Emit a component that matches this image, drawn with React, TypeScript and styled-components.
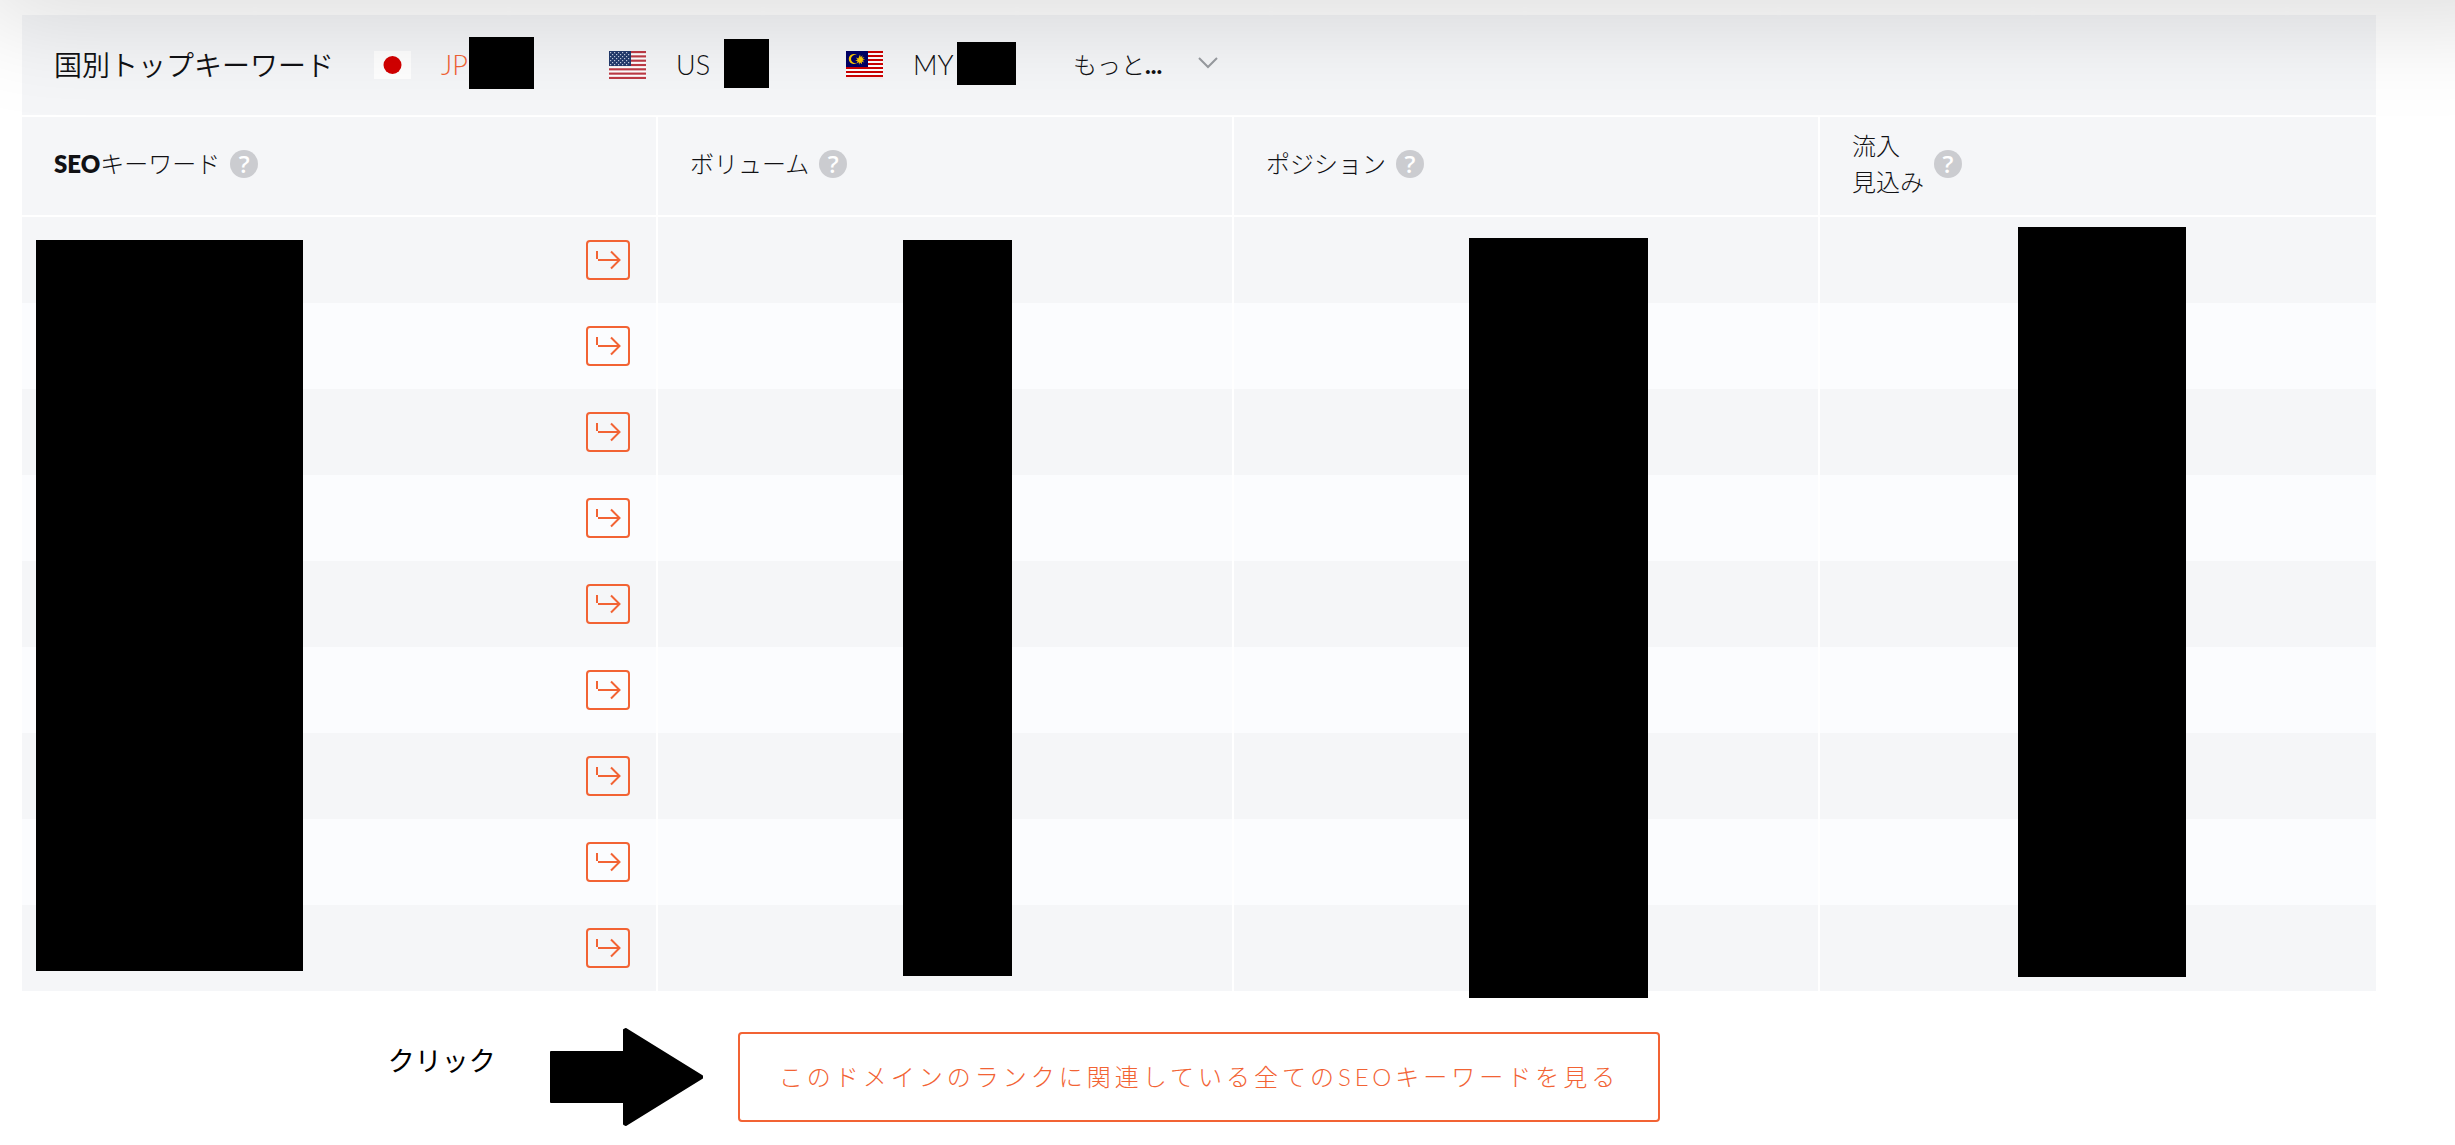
import React from "react";
import styled, { createGlobalStyle } from "styled-components";

const ORANGE = "#f26334";
const INK = "#111114";

const GlobalStyle = createGlobalStyle`
  *, *::before, *::after { box-sizing: border-box; }
  body {
    margin: 0;
    background: #ffffff;
    color: ${INK};
    font-family: Lato, "Noto Sans CJK JP", sans-serif;
    font-weight: 300;
  }
`;

const Page = styled.main`
  position: relative;
  overflow: hidden;
  padding: 15px 79px 19px 22px;
`;

const TopShade = styled.div`
  position: absolute;
  top: -100px;
  left: -20px;
  right: -100px;
  height: 100px;
  box-shadow: 0 10px 110px rgba(0, 0, 0, 0.17);
  pointer-events: none;
`;

const CountryBar = styled.header`
  display: flex;
  align-items: center;
  height: 100px;
  padding-left: 32px;
  margin-bottom: 2px;
  background: #f5f6f8;
`;

const Title = styled.h1`
  margin: 0 40px 0 0;
  font-size: 28px;
  line-height: 40px;
  font-weight: 350;
  white-space: nowrap;
`;

const CountryTab = styled.button<{ $active?: boolean; $width: number }>`
  display: flex;
  align-items: center;
  flex: none;
  width: ${(p) => p.$width}px;
  padding: 0;
  border: 0;
  background: none;
  color: ${(p) => (p.$active ? ORANGE : INK)};
  font: inherit;
  font-size: 27px;
  line-height: 40px;
  text-align: left;
`;

const FlagBox = styled.span`
  display: flex;
  margin-right: 30px;
`;

const Code = styled.span<{ $width: number }>`
  flex: none;
  width: ${(p) => p.$width}px;
`;

const Mask = styled.span<{ $width: number; $height: number }>`
  position: relative;
  flex: none;
  width: ${(p) => p.$width}px;
  height: ${(p) => p.$height}px;
  margin-bottom: 4px;
  background: #000000;
`;

const MoreButton = styled.button`
  display: flex;
  align-items: center;
  gap: 36px;
  padding: 0;
  border: 0;
  background: none;
  color: ${INK};
  font: inherit;
  font-size: 24px;
  line-height: 36px;
  svg { margin-bottom: 4px; }
  b { font-weight: 900; }
`;

const TableArea = styled.div`
  position: relative;
`;

const Table = styled.table`
  width: 100%;
  table-layout: fixed;
  border-collapse: separate;
  border-spacing: 0;
`;

const HeadCell = styled.th`
  height: 100px;
  padding: 0 0 4px 32px;
  border-bottom: 2px solid #ffffff;
  background: #f5f6f8;
  font-size: 24px;
  line-height: 36px;
  font-weight: 300;
  text-align: left;
  & + & { border-left: 2px solid #ffffff; }
`;

const HeadLabel = styled.div`
  display: flex;
  align-items: center;
  gap: 10px;
  b { font-weight: 800; }
`;

const HelpButton = styled.button`
  width: 28px;
  height: 28px;
  padding: 0;
  border: 0;
  border-radius: 50%;
  background: #cbccd0;
  color: #ffffff;
  font-family: "Open Sans", sans-serif;
  font-size: 24px;
  line-height: 28px;
  font-weight: 600;
  text-align: center;
`;

const Row = styled.tr`
  background: #fbfcfe;
  &:nth-child(odd) { background: #f5f6f8; }
`;

const Cell = styled.td`
  height: 86px;
  padding: 0 26px 0 0;
  & + & { border-left: 2px solid #ffffff; }
`;

const GoButton = styled.button`
  display: flex;
  align-items: center;
  justify-content: center;
  width: 44px;
  height: 40px;
  margin-left: auto;
  padding: 0;
  border: 2px solid ${ORANGE};
  border-radius: 4px;
  background: none;
  color: ${ORANGE};
`;

const Redaction = styled.div<{ $left: number; $top: number; $width: number; $height: number }>`
  position: absolute;
  left: ${(p) => (p.$left / 2354) * 100}%;
  top: ${(p) => p.$top}px;
  width: ${(p) => (p.$width / 2354) * 100}%;
  height: ${(p) => p.$height}px;
  background: #000000;
`;

const Footer = styled.footer`
  display: grid;
  grid-template-columns: 1fr auto 1fr;
  align-items: center;
  padding-top: 37px;
`;

const Hint = styled.div`
  display: flex;
  justify-content: flex-end;
  align-items: center;
  gap: 54px;
  padding-right: 35px;
`;

const HintText = styled.span`
  padding-bottom: 32px;
  color: #000000;
  font-size: 27px;
  line-height: 40px;
  font-weight: 400;
`;

const AllKeywordsButton = styled.button`
  height: 90px;
  padding: 0 39px;
  border: 2px solid ${ORANGE};
  border-radius: 4px;
  background: #ffffff;
  color: ${ORANGE};
  font: inherit;
  font-size: 24px;
  line-height: 36px;
  letter-spacing: 4px;
  white-space: nowrap;
`;

const JapanFlag = () => (
  <svg width="37" height="28" viewBox="0 0 37 28" aria-hidden="true">
    <rect width="37" height="28" fill="#fff" />
    <circle cx="18.5" cy="14" r="9" fill="#d30000" />
  </svg>
);

const UsFlag = () => (
  <svg width="37" height="28" viewBox="0 0 37 28" aria-hidden="true">
    <rect width="37" height="28" fill="#fff" />
    {[0, 1, 2, 3, 4, 5, 6].map((i) => (
      <rect key={i} y={i * 4.31} width="37" height="2.15" fill="#be3b46" />
    ))}
    <rect width="22" height="15" fill="#233a6c" />
    {[1, 3, 5, 7, 9, 11, 13].map((y, r) =>
      [1, 5, 9, 13, 17].map((x) => (
        <rect key={`${x}-${y}`} x={x + (r % 2) * 2} y={y} width="1.2" height="1.2" fill="#c3cce0" />
      ))
    )}
  </svg>
);

const MalaysiaFlag = () => (
  <svg width="37" height="28" viewBox="0 0 37 28" aria-hidden="true">
    <rect width="37" height="28" fill="#fff" />
    {[0, 1, 2, 3, 4, 5, 6].map((i) => (
      <rect key={i} y={i * 4} width="37" height="2" fill="#cc0000" />
    ))}
    <rect y="26" width="37" height="2" fill="#fbeeee" />
    <rect width="22" height="16" fill="#000066" />
    <path d="M11 4.2a5 5 0 1 0 0 7.600a4.200 4.200 0 1 1 0-7.600z" fill="#ffcc00" />
    <path
      d="M14 3.500l.7 2.700 1.900-2-.8 2.600 2.700-.6-2 1.800 2.600.8-2.600.6 1.800 2-2.600-.8.4 2.600-2.100-1.800-.9 2.400-.5-2.700-2 1.500 1-2.500-2.500-.4 2.400-1-1.500-2.200 2.300 1z"
      fill="#ffcc00"
    />
  </svg>
);

const FlowArrow = () => (
  <svg width="26" height="20" viewBox="0 0 26 20" fill="none" stroke="currentColor" strokeWidth="2" aria-hidden="true">
    <path d="M2 1V9M3 10H25M16 1.500L24.500 10L16 18.500" />
  </svg>
);

const Chevron = () => (
  <svg width="20" height="12" viewBox="0 0 20 12" fill="none" stroke="#999ca1" strokeWidth="2" aria-hidden="true">
    <path d="M1 1L10 10L19 1" />
  </svg>
);

const PointerArrow = () => (
  <svg width="153" height="98" viewBox="0 0 153 98" aria-hidden="true">
    <path
      d="M1 24H74V2L76 1L152 48V50L76 97L74 96V74H1Z"
      fill="#000"
      stroke="#000"
      strokeWidth="2"
      strokeLinejoin="round"
    />
  </svg>
);

const countries = [
  { code: "JP", Flag: JapanFlag, active: true, width: 235, codeWidth: 28, mask: [65, 52] },
  { code: "US", Flag: UsFlag, active: false, width: 237, codeWidth: 48, mask: [45, 49] },
  { code: "MY", Flag: MalaysiaFlag, active: false, width: 227, codeWidth: 44, mask: [59, 43] },
];

const columns = [
  { width: 634, name: "SEOキーワード", label: <span><b>SEO</b>キーワード</span> },
  { width: 576, name: "ボリューム", label: <span>ボリューム</span> },
  { width: 586, name: "ポジション", label: <span>ポジション</span> },
  { width: 558, name: "流入見込み", label: <span>流入<br />見込み</span> },
];

const redactions = [
  { left: 14, top: 123, width: 267, height: 731 },
  { left: 881, top: 123, width: 109, height: 736 },
  { left: 1447, top: 121, width: 179, height: 760 },
  { left: 1996, top: 110, width: 168, height: 750 },
];

export default function App() {
  return (
    <>
      <GlobalStyle />
      <Page>
        <CountryBar>
          <Title>国別トップキーワード</Title>
          {countries.map(({ code, Flag, active, width, codeWidth, mask }) => (
            <CountryTab key={code} type="button" $active={active} $width={width}>
              <FlagBox><Flag /></FlagBox>
              <Code $width={codeWidth}>{code}</Code>
              <Mask $width={mask[0]} $height={mask[1]} />
            </CountryTab>
          ))}
          <MoreButton type="button">
            <span>もっと<b>...</b></span>
            <Chevron />
          </MoreButton>
        </CountryBar>
        <TableArea>
          <Table>
            <colgroup>
              {columns.map((c) => (
                <col key={c.name} style={{ width: `${(c.width / 2354) * 100}%` }} />
              ))}
            </colgroup>
            <thead>
              <tr>
                {columns.map((c) => (
                  <HeadCell key={c.name} scope="col">
                    <HeadLabel>
                      {c.label}
                      <HelpButton type="button" aria-label={c.name}>?</HelpButton>
                    </HeadLabel>
                  </HeadCell>
                ))}
              </tr>
            </thead>
            <tbody>
              {Array.from({ length: 9 }, (_, i) => (
                <Row key={i}>
                  <Cell>
                    <GoButton type="button" aria-label="キーワードを開く"><FlowArrow /></GoButton>
                  </Cell>
                  <Cell />
                  <Cell />
                  <Cell />
                </Row>
              ))}
            </tbody>
          </Table>
          {redactions.map((r) => (
            <Redaction key={r.left} $left={r.left} $top={r.top} $width={r.width} $height={r.height} />
          ))}
        </TableArea>
        <Footer>
          <Hint>
            <HintText>クリック</HintText>
            <PointerArrow />
          </Hint>
          <AllKeywordsButton type="button">
            このドメインのランクに関連している全てのSEOキーワードを見る
          </AllKeywordsButton>
        </Footer>
        <TopShade />
      </Page>
    </>
  );
}
